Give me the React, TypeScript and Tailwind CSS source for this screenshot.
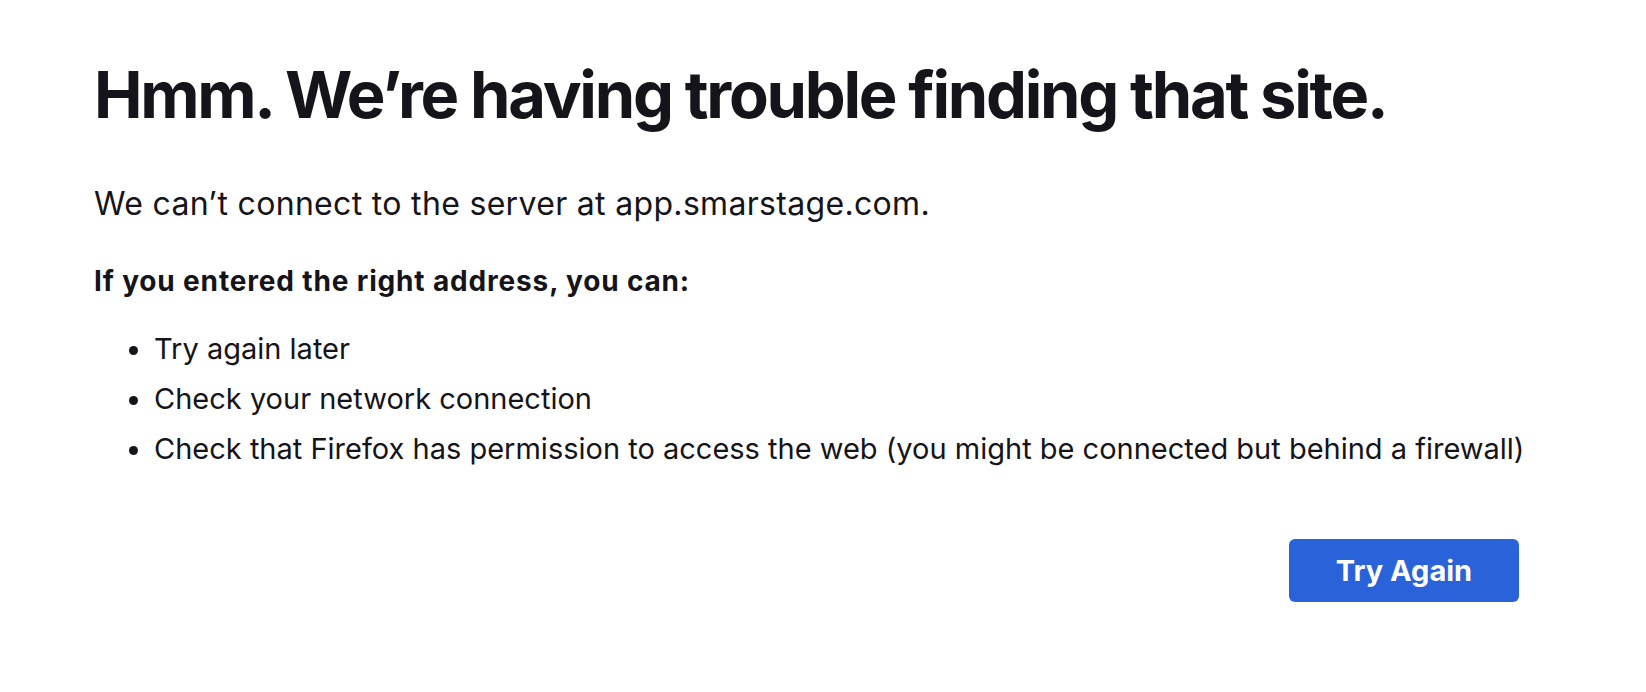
import React from 'react';

const items = [
    'Try again later',
    'Check your network connection',
    'Check that Firefox has permission to access the web (you might be connected but behind a firewall)',
];

const App = () => {
    return (
        <div className="min-h-screen bg-white font-['Inter',sans-serif] text-[#15141a]">
            <div className="w-[1425px] ml-[94px] pt-[62px]">
                {/* Title */}
                <h1 className="text-[65px] font-bold leading-none tracking-[-0.035em]">
                    Hmm. We’re having trouble finding that site.
                </h1>

                {/* Description */}
                <p className="mt-[61px] text-[32px] leading-none tracking-[0.01em]">
                    We can’t connect to the server at app.smarstage.com.
                </p>

                <p className="mt-[47px] text-[28px] font-bold leading-none tracking-[0.03em]">
                    If you entered the right address, you can:
                </p>

                <ul className="mt-[39px] pl-[60px] list-disc text-[29px] leading-none whitespace-nowrap space-y-[21px]">
                    {items.map((item) => (
                        <li key={item}>{item}</li>
                    ))}
                </ul>

                {/* Footer */}
                <div className="flex justify-end mt-[76px]">
                    <button className="w-[230px] h-[63px] rounded-[6px] bg-[#2a63d9] text-white text-[29px] font-bold">
                        Try Again
                    </button>
                </div>
            </div>
        </div>
    );
};

export default App;
